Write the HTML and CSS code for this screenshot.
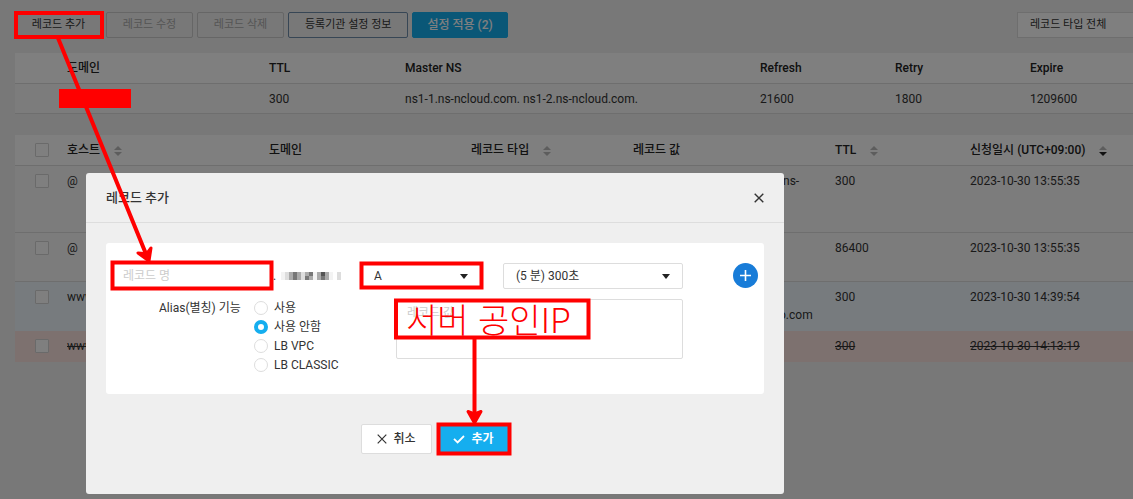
FILE: index.html
```html
<!DOCTYPE html>
<html lang="ko">
<head>
    <meta charset="UTF-8">
    <meta name="viewport" content="width=device-width, initial-scale=1.0">
    <title>레코드 추가</title>
    <link rel="stylesheet" href="styles.css">
</head>
<body>
    <div class="page">
        <div class="toolbar">
            <button type="button" class="btn">레코드 추가</button>
            <button type="button" class="btn" disabled>레코드 수정</button>
            <button type="button" class="btn" disabled>레코드 삭제</button>
            <button type="button" class="btn btn-outline">등록기관 설정 정보</button>
            <button type="button" class="btn btn-primary">설정 적용 (2)</button>
            <select class="type-filter" aria-label="레코드 타입">
                <option>레코드 타입 전체</option>
            </select>
        </div>

        <table class="grid domain-grid">
            <colgroup>
                <col class="w-52"><col class="w-202"><col class="w-136"><col class="w-355"><col class="w-135"><col class="w-135"><col>
            </colgroup>
            <thead>
                <tr><th></th><th>도메인</th><th>TTL</th><th>Master NS</th><th>Refresh</th><th>Retry</th><th>Expire</th></tr>
            </thead>
            <tbody>
                <tr><td></td><td></td><td>300</td><td>ns1-1.ns-ncloud.com. ns1-2.ns-ncloud.com.</td><td>21600</td><td>1800</td><td>1209600</td></tr>
            </tbody>
        </table>

        <table class="grid record-grid">
            <colgroup>
                <col class="w-52"><col class="w-202"><col class="w-202"><col class="w-162"><col class="w-202"><col class="w-135"><col>
            </colgroup>
            <thead>
                <tr>
                    <th class="check"><input type="checkbox" aria-label="전체 선택"></th>
                    <th><span class="sortable">호스트<i class="sort"></i></span></th>
                    <th>도메인</th>
                    <th><span class="sortable">레코드 타입<i class="sort"></i></span></th>
                    <th>레코드 값</th>
                    <th><span class="sortable">TTL<i class="sort"></i></span></th>
                    <th><span class="sortable">신청일시 (UTC+09:00)<i class="sort sort-desc"></i></span></th>
                </tr>
            </thead>
            <tbody>
                <tr class="row-lg">
                    <td class="check"><input type="checkbox" aria-label="선택"></td>
                    <td>@</td><td></td><td></td>
                    <td class="value">ns-</td>
                    <td>300</td><td>2023-10-30 13:55:35</td>
                </tr>
                <tr class="row-md">
                    <td class="check"><input type="checkbox" aria-label="선택"></td>
                    <td>@</td><td></td><td></td><td></td>
                    <td>86400</td><td>2023-10-30 13:55:35</td>
                </tr>
                <tr class="row-md added">
                    <td class="check"><input type="checkbox" aria-label="선택"></td>
                    <td>www</td><td></td><td></td>
                    <td class="value value-wide"><br>o.com</td>
                    <td>300</td><td>2023-10-30 14:39:54</td>
                </tr>
                <tr class="removed">
                    <td class="check"><input type="checkbox" aria-label="선택"></td>
                    <td>www</td><td></td><td></td><td></td>
                    <td>300</td><td>2023-10-30 14:13:19</td>
                </tr>
            </tbody>
        </table>
    </div>

    <div class="backdrop"></div>

    <div class="dialog" role="dialog" aria-labelledby="dialogTitle">
        <div class="dialog-head">
            <h2 id="dialogTitle">레코드 추가</h2>
            <button type="button" class="close" aria-label="닫기">
                <svg width="10" height="10" viewBox="0 0 10 10"><path d="M.7.7l8.6 8.6M9.3.7L.7 9.3" stroke="#333" stroke-width="1.4"/></svg>
            </button>
        </div>
        <form class="card">
            <div class="form-row">
                <input type="text" class="field name-field" placeholder="레코드 명" aria-label="레코드 명">
                <div class="suffix">
                    <span>.</span>
                    <svg width="60" height="8" viewBox="0 0 60 8" shape-rendering="crispEdges">
                        <path fill="#f3f3f3" d="M0 0h4v8H0zM32 0h4v8h-4zM48 0h4v8h-4z"/>
                        <path fill="#ddd" d="M4 0h4v8H4zM20 0h4v8h-4zM56 0h4v8h-4z"/>
                        <path fill="#aaa" d="M8 0h12v8H8zM24 0h8v8h-8zM36 0h12v8H36z"/>
                        <path fill="#777" d="M12 0h4v8h-4zM24 4h4v4h-4zM28 0h4v4h-4zM40 4h4v4h-4z"/>
                        <path fill="#555" d="M40 0h4v4h-4z"/>
                    </svg>
                </div>
                <div class="select type-select">
                    <select class="field" aria-label="레코드 타입"><option>A</option></select>
                </div>
                <div class="select ttl-select">
                    <select class="field" aria-label="TTL"><option>(5 분) 300초</option></select>
                </div>
                <button type="button" class="plus" aria-label="추가">
                    <svg width="11" height="11" viewBox="0 0 11 11"><path d="M5.5 0v11M0 5.5h11" stroke="#fff" stroke-width="1.6"/></svg>
                </button>
            </div>
            <div class="form-row">
                <fieldset class="alias">
                    <legend>Alias(별칭) 기능</legend>
                    <div class="radios">
                        <label><input type="radio" name="alias">사용</label>
                        <label><input type="radio" name="alias" checked>사용 안함</label>
                        <label><input type="radio" name="alias">LB VPC</label>
                        <label><input type="radio" name="alias">LB CLASSIC</label>
                    </div>
                </fieldset>
                <textarea class="field" placeholder="레코드 값" aria-label="레코드 값"></textarea>
            </div>
        </form>
        <div class="dialog-foot">
            <button type="button" class="btn-lg">
                <svg width="10" height="10" viewBox="0 0 10 10"><path d="M.7.7l8.6 8.6M9.3.7L.7 9.3" stroke="#333" stroke-width="1.2"/></svg>
                취소
            </button>
            <button type="button" class="btn-lg btn-submit">
                <svg width="12" height="10" viewBox="0 0 12 10"><path d="M1 4.8l3.6 3.6L11 2" fill="none" stroke="#fff" stroke-width="1.8"/></svg>
                추가
            </button>
        </div>
    </div>

    <!-- guide marks -->
    <svg class="marks" width="1133" height="499" viewBox="0 0 1133 499" aria-hidden="true">
        <path fill="#f00" d="M59 89h72v19H59z"/>
        <g fill="none" stroke="#f00" stroke-width="4">
            <path d="M16 13h86v24H16zM112.500 262.500h159v26h-159zM361.500 263.500h120v24h-120zM396 300.500h192.500v37H396zM438.500 424.500h71v29h-71z"/>
            <path d="M58 38L146 254M474.500 339v76"/>
        </g>
        <g fill="#f00" stroke="#f00" stroke-width="3" stroke-linejoin="round">
            <path d="M149 261l-11-8 6 .5 4-1.500 3-4z"/>
            <path d="M474.500 423l-6.500-11.500 6.500 2.500 6.500-2.500z"/>
        </g>
    </svg>
    <div class="mark-text">서버 공인IP</div>
</body>
</html>
```

FILE: styles.css
```css
* {
    box-sizing: border-box;
}
body {
    margin: 0;
    min-height: 100vh;
    overflow: hidden;
    position: relative;
    background: #f0f0f0;
    color: #333;
    font-family: Roboto, "Noto Sans CJK KR", sans-serif;
    font-size: 12px;
    line-height: 18px;
}
button, input, select, textarea {
    font: inherit;
    color: inherit;
    margin: 0;
}
.page {
    padding: 12px 0 0 15px;
}

/* toolbar */
.toolbar {
    display: flex;
    gap: 4px;
    margin-bottom: 15px;
}
.btn {
    min-width: 87px;
    height: 26px;
    padding: 0 15px;
    border: 1px solid #ccc;
    border-radius: 2px;
    background: transparent;
    font-size: 11px;
    white-space: nowrap;
}
.btn:disabled {
    color: #aaa;
}
.btn-outline {
    padding: 0 16px;
    border-color: #6f8cab;
}
.btn-primary {
    padding: 0 14px;
    border-color: #15aeef;
    background: #15aeef;
    color: #fff;
    font-size: 12px;
    font-weight: 500;
}
.type-filter {
    appearance: none;
    width: 116px;
    height: 26px;
    margin-left: auto;
    padding: 0 12px;
    border: 1px solid #ddd;
    border-right: 0;
    background: #fff;
    font-size: 11px;
}

/* tables */
.grid {
    width: 100%;
    margin-bottom: 21px;
    border-collapse: separate;
    border-spacing: 0;
    table-layout: fixed;
    background: #f8f8f8;
}
.w-52 { width: 52px; }
.w-135 { width: 135px; }
.w-136 { width: 136px; }
.w-162 { width: 162px; }
.w-202 { width: 202px; }
.w-355 { width: 355px; }
.grid th,
.grid td {
    padding: 6px 0;
    border-bottom: 1px solid #ddd;
    text-align: left;
    vertical-align: top;
    white-space: nowrap;
}
.grid th {
    background: #fff;
    color: #222;
    font-weight: 500;
}
.grid .check {
    padding-left: 20px;
}
.grid .value {
    padding-left: 150px;
}
.grid .value-wide {
    padding-left: 146px;
}
.grid .row-lg td {
    height: 67px;
}
.grid .row-md td {
    height: 49px;
}
.grid .added td {
    background: #eef7fd;
}
.grid .removed td {
    background: #fbe3df;
    text-decoration: line-through;
}
.grid .removed td,
.grid .added td {
    border-bottom-color: transparent;
}
.check input {
    appearance: none;
    display: block;
    width: 14px;
    height: 14px;
    margin-top: 2px;
    border: 1px solid #d5d5d5;
    border-radius: 1px;
    background: #fff;
}
.domain-grid tbody td {
    padding-bottom: 5px;
}
.sortable {
    display: flex;
    align-items: center;
    gap: 14px;
    height: 18px;
}
.sort {
    display: flex;
    flex-direction: column;
    gap: 2px;
    padding-top: 2px;
}
.sort::before,
.sort::after {
    content: "";
    border: 4px solid transparent;
}
.sort::before {
    border-top: 0;
    border-bottom: 4px solid #bbb;
}
.sort::after {
    border-bottom: 0;
    border-top: 4px solid #bbb;
}
.sort-desc::after {
    border-top-color: #222;
}

.backdrop {
    position: absolute;
    inset: 0;
    background: rgba(0, 0, 0, 0.5);
}

/* dialog */
.dialog {
    position: absolute;
    top: 173px;
    left: 86px;
    width: 698px;
    padding-bottom: 40px;
    border-radius: 3px;
    background: #efefef;
}
.dialog-head {
    display: flex;
    align-items: center;
    justify-content: space-between;
    height: 50px;
    padding: 0 20px;
    border-bottom: 1px solid #ddd;
}
.dialog-head h2 {
    margin: 0;
    font-size: 13px;
    font-weight: 500;
}
.close {
    display: flex;
    padding: 0;
    border: 0;
    background: none;
}
.card {
    display: flex;
    flex-direction: column;
    gap: 10px;
    margin: 20px;
    padding: 20px 6px 20px 7px;
    border-radius: 3px;
    background: #fff;
}
.form-row {
    display: flex;
}
.field {
    display: block;
    height: 26px;
    padding: 0 12px;
    border: 1px solid #ddd;
    border-radius: 2px;
    background: #fff;
    outline: 0;
}
.field::placeholder {
    color: #ccc;
}
.name-field {
    width: 160px;
    padding: 0 9px;
}
.suffix {
    display: flex;
    align-items: center;
    gap: 5px;
    width: 88px;
}
.select {
    position: relative;
}
.select select {
    appearance: none;
    width: 100%;
}
.select::after {
    content: "";
    position: absolute;
    top: 11px;
    right: 13px;
    border: 4px solid transparent;
    border-top: 5px solid #222;
    border-bottom: 0;
    pointer-events: none;
}
.type-select {
    width: 122px;
    margin-right: 20px;
}
.type-select::after {
    right: 15px;
}
.ttl-select {
    width: 180px;
}
.plus {
    display: flex;
    align-items: center;
    justify-content: center;
    width: 25px;
    height: 25px;
    margin-left: 50px;
    padding: 0;
    border: 0;
    border-radius: 50%;
    background: #187cd8;
}
.alias {
    display: flex;
    width: 283px;
    margin: 0;
    padding: 0 0 0 46px;
    border: 0;
}
.alias legend {
    float: left;
    width: 95px;
    padding: 0;
}
.radios {
    margin-top: -1px;
}
.radios label {
    display: flex;
    align-items: center;
    gap: 6px;
    height: 19px;
}
.radios input {
    appearance: none;
    width: 14px;
    height: 14px;
    border: 1px solid #ddd;
    border-radius: 50%;
    background: #fff;
}
.radios input:checked {
    border: 4px solid #15aeef;
}
textarea.field {
    width: 287px;
    height: 60px;
    padding: 4px 10px;
    resize: none;
}
.dialog-foot {
    display: flex;
    justify-content: center;
    gap: 6px;
    margin-top: 30px;
}
.btn-lg {
    display: flex;
    align-items: center;
    justify-content: center;
    gap: 6px;
    width: 71px;
    height: 30px;
    padding: 0;
    border: 1px solid #ddd;
    border-radius: 2px;
    background: #fff;
    font-weight: 500;
}
.btn-submit {
    border-color: #15aeef;
    background: #15aeef;
    color: #fff;
    font-weight: 700;
}

/* guide marks over the screen */
.marks {
    position: absolute;
    top: 0;
    left: 0;
    pointer-events: none;
}
.mark-text {
    position: absolute;
    top: 300px;
    left: 406px;
    color: #f00;
    font-family: "Noto Sans CJK KR", sans-serif;
    font-size: 34px;
    font-weight: 300;
    line-height: 38px;
    white-space: nowrap;
}
```
